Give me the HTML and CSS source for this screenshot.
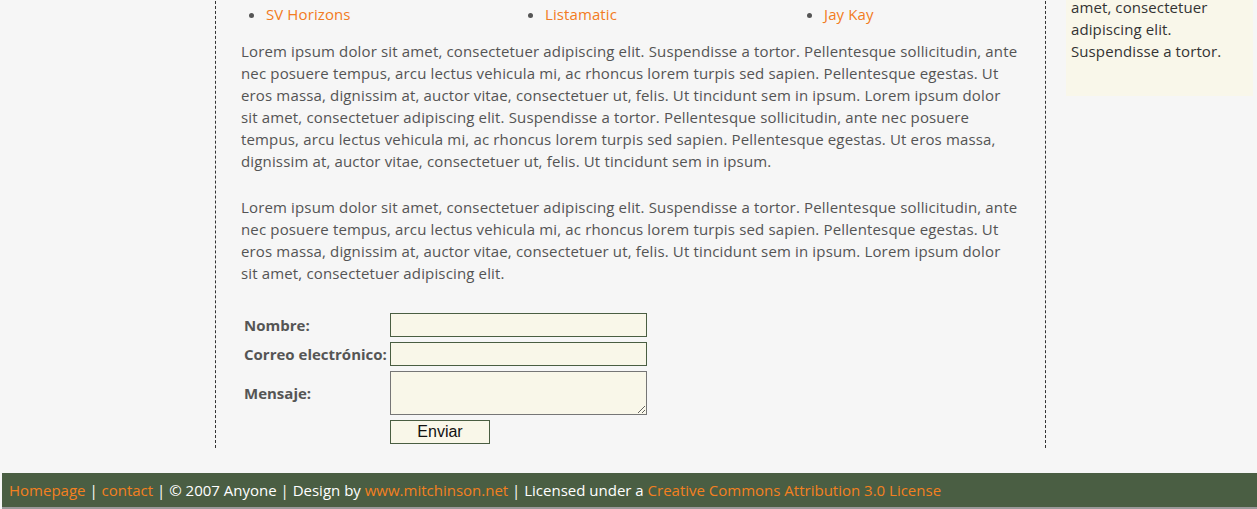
FILE: index.html
```html
<!DOCTYPE html>
<html lang="es">
<head>
<meta charset="utf-8">
<title>Contacto</title>
<link rel="stylesheet" href="styles.css">
</head>
<body>
<div class="page">
  <div class="left-col"></div>
  <div class="main">
    <ul class="links">
      <li><a href="#">SV Horizons</a></li>
      <li><a href="#">Listamatic</a></li>
      <li><a href="#">Jay Kay</a></li>
    </ul>
    <p class="para">Lorem ipsum dolor sit amet, consectetuer adipiscing elit. Suspendisse a tortor. Pellentesque sollicitudin, ante nec posuere tempus, arcu lectus vehicula mi, ac rhoncus lorem turpis sed sapien. Pellentesque egestas. Ut eros massa, dignissim at, auctor vitae, consectetuer ut, felis. Ut tincidunt sem in ipsum. Lorem ipsum dolor sit amet, consectetuer adipiscing elit. Suspendisse a tortor. Pellentesque sollicitudin, ante nec posuere tempus, arcu lectus vehicula mi, ac rhoncus lorem turpis sed sapien. Pellentesque egestas. Ut eros massa, dignissim at, auctor vitae, consectetuer ut, felis. Ut tincidunt sem in ipsum.</p>
    <p class="para second">Lorem ipsum dolor sit amet, consectetuer adipiscing elit. Suspendisse a tortor. Pellentesque sollicitudin, ante nec posuere tempus, arcu lectus vehicula mi, ac rhoncus lorem turpis sed sapien. Pellentesque egestas. Ut eros massa, dignissim at, auctor vitae, consectetuer ut, felis. Ut tincidunt sem in ipsum. Lorem ipsum dolor sit amet, consectetuer adipiscing elit.</p>
    <form class="contact">
      <label class="lbl" for="nombre">Nombre:</label>
      <input class="field" id="nombre" type="text">
      <label class="lbl" for="correo">Correo electrónico:</label>
      <input class="field" id="correo" type="text">
      <label class="lbl" for="mensaje">Mensaje:</label>
      <textarea class="area" id="mensaje"></textarea>
      <span></span>
      <button class="send" type="button">Enviar</button>
    </form>
  </div>
  <aside class="sidebar">
    <p>amet, consectetuer adipiscing elit. Suspendisse a tortor.</p>
  </aside>
</div>
<footer class="footer">
  <a href="#">Homepage</a> | <a href="#">contact</a> | © 2007 Anyone | Design by <a href="#">www.mitchinson.net</a> | Licensed under a <a href="#">Creative Commons Attribution 3.0 License</a>
</footer>
</body>
</html>
```
FILE: styles.css
```css
html, body {
  margin: 0;
  padding: 0;
  background: #f6f6f6;
}
body {
  font-family: "Open Sans", "Noto Sans", sans-serif;
  font-size: 15px;
  letter-spacing: 0.1px;
  line-height: 22px;
  color: #545454;
  overflow: hidden;
}
a {
  color: #f27b22;
  text-decoration: none;
}
.page {
  display: flex;
  align-items: flex-start;
  margin-top: -4px;
}
.left-col {
  width: 215px;
  flex: none;
}
.main {
  width: 804px;
  flex: none;
  border-left: 1px dashed #333;
  border-right: 1px dashed #333;
  padding: 7px 0 4px 25px;
}
.links {
  display: grid;
  grid-template-columns: 279px 279px 1fr;
  margin: 0;
  padding: 0 0 0 25px;
  color: #555;
}
.para {
  margin: 15px 0 0 0;
  width: 779px;
  letter-spacing: 0.15px;
}
.para.second {
  margin-top: 24px;
}
.contact {
  display: grid;
  grid-template-columns: 146px 257px;
  grid-template-rows: 24px 24px 44px 24px;
  row-gap: 5px;
  margin-top: 29px;
  padding-left: 3px;
  align-items: center;
}
.lbl {
  font-weight: bold;
  color: #555;
  white-space: nowrap;
  letter-spacing: 0;
}
.field, .area {
  box-sizing: border-box;
  width: 257px;
  height: 24px;
  margin: 0;
  background: #f9f7e9;
  border: 1px solid #4a5e42;
  padding: 2px;
  font: inherit;
}
.area {
  height: 44px;
  border-color: #767676;
  resize: both;
}
.send {
  box-sizing: border-box;
  width: 100px;
  height: 24px;
  background: #f9f7e9;
  border: 1px solid #4a5e42;
  font-family: "Liberation Sans", Arial, sans-serif;
  font-size: 16px;
  letter-spacing: 0;
  color: #111;
  padding: 0;
}
.sidebar {
  margin-left: 20px;
  width: 187px;
  flex: none;
  background: #f9f7ea;
  padding: 0 0 34px 5px;
  box-sizing: border-box;
  color: #333;
}
.sidebar p {
  margin: 0;
}
.footer {
  margin: 25px 0 0 2px;
  background: #4a5e43;
  color: #fff;
  height: 34px;
  line-height: 34px;
  padding-left: 7px;
  border-bottom: 2px solid #9a9a9a;
  white-space: nowrap;
  letter-spacing: 0;
}
.footer a {
  color: #f4801f;
}
```
